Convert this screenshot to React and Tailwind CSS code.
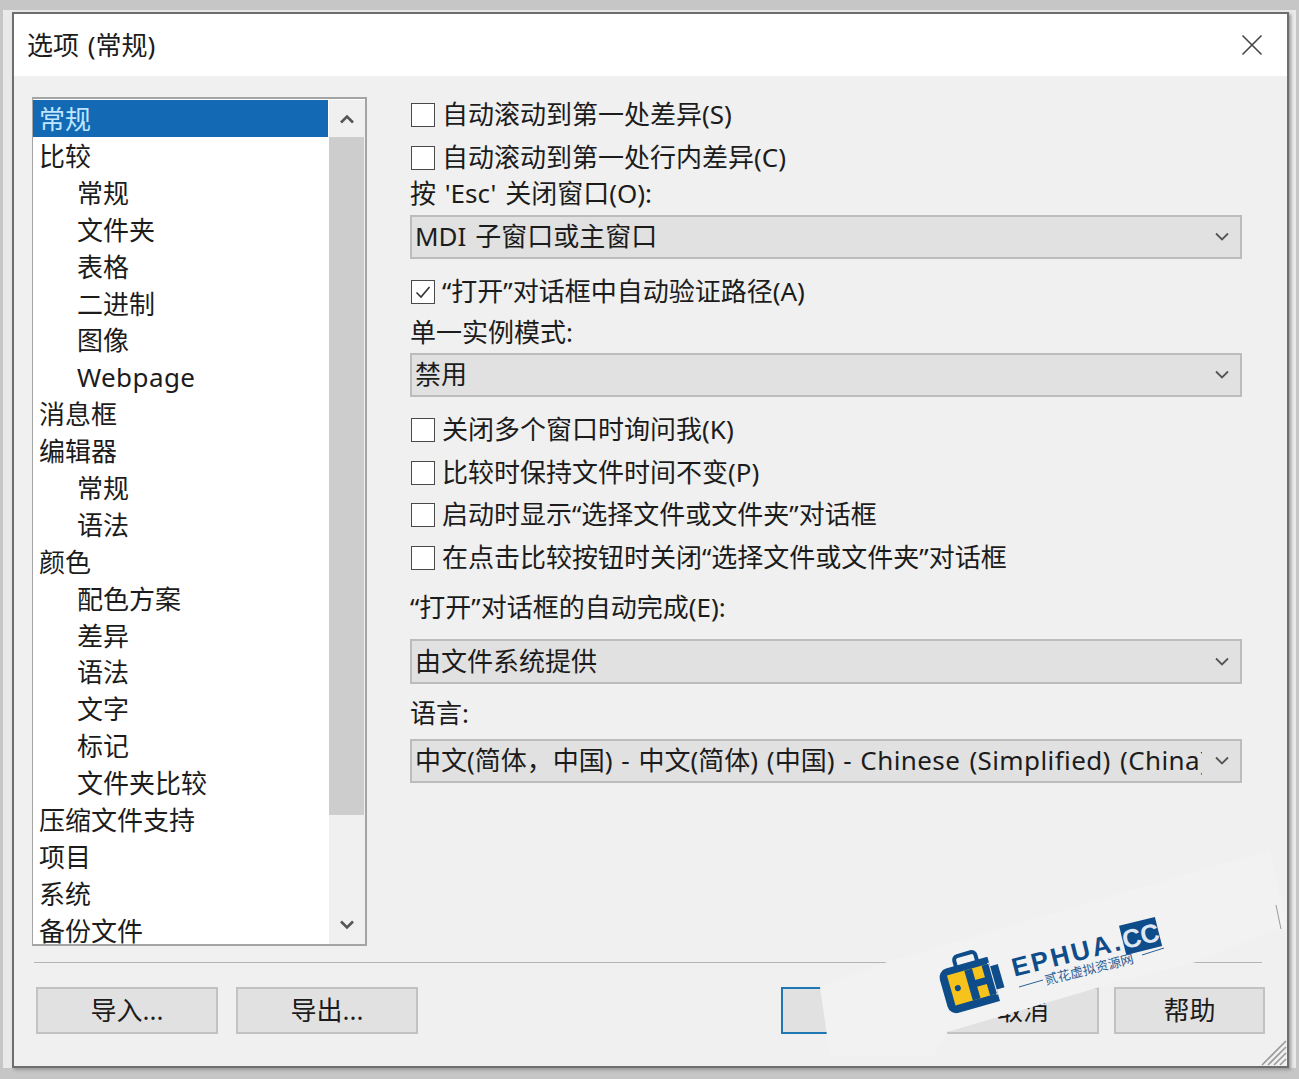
const FONT = { fontFamily: '"Noto Sans", "Noto Sans CJK SC", sans-serif' }

const NAV = [
  ['比较', 0],
  ['常规', 1],
  ['文件夹', 1],
  ['表格', 1],
  ['二进制', 1],
  ['图像', 1],
  ['Webpage', 1],
  ['消息框', 0],
  ['编辑器', 0],
  ['常规', 1],
  ['语法', 1],
  ['颜色', 0],
  ['配色方案', 1],
  ['差异', 1],
  ['语法', 1],
  ['文字', 1],
  ['标记', 1],
  ['文件夹比较', 1],
  ['压缩文件支持', 0],
  ['项目', 0],
  ['系统', 0],
  ['备份文件', 0],
]

function Chevron({ up, width = 2.6, className }) {
  return (
    <svg width="16" height="12" viewBox="0 0 16 12" className={className}>
      <path
        d={up ? 'M2 9.5 L8 3.5 L14 9.5' : 'M2 2.5 L8 8.5 L14 2.5'}
        fill="none"
        stroke="#555"
        strokeWidth={width}
      />
    </svg>
  )
}

function Check({ label, checked, className }) {
  return (
    <div className={`flex h-[36px] items-center gap-[7px] ${className}`}>
      <span className="ml-[1px] flex h-[24px] w-[24px] shrink-0 items-center justify-center border border-[#4a4a4a] bg-white">
        {checked && (
          <svg width="18" height="18" viewBox="0 0 18 18">
            <path d="M2.5 9.5 L7 14 L15.5 4" fill="none" stroke="#333" strokeWidth="1.6" />
          </svg>
        )}
      </span>
      <span className="whitespace-nowrap pb-[1px]">{label}</span>
    </div>
  )
}

function Label({ children, className }) {
  return <div className={`flex h-[36px] items-center whitespace-nowrap pb-[1px] ${className}`}>{children}</div>
}

function Select({ value, className }) {
  return (
    <div className={`flex items-center border-2 border-[#bcbcbc] bg-[#e1e1e1] pl-[3px] ${className}`}>
      <span className="w-[787px] overflow-hidden whitespace-nowrap pb-[1px]">{value}</span>
      <Chevron width={1.8} className="ml-[12px]" />
    </div>
  )
}

function Btn({ children, className }) {
  return (
    <div className={`flex h-[47px] items-center justify-center border-2 border-[#c2c2c2] bg-[#e1e1e1] ${className}`}>
      {children}
    </div>
  )
}

function Watermark() {
  return (
    <>
      <svg width="1299" height="1079" viewBox="0 0 1299 1079" className="absolute left-0 top-0">
        <polygon
          points="820,987 887,962 1270,850 1286,925 1196,962 1100,987 947,1032 934,1056 830,1056"
          fill="#f2f2f2"
        />
        <path d="M1276 905 L1281 929" stroke="#9a9a9a" strokeWidth="1" />
        <g transform="rotate(-16 972 983)">
          <rect x="961" y="953" width="22" height="14" rx="4" fill="none" stroke="#0f4c8a" strokeWidth="4" />
          <rect x="942" y="962" width="60" height="46" rx="9" fill="#0f4c8a" />
          <rect x="950" y="969" width="42" height="31" fill="#f6c31c" />
          <circle cx="957" cy="984" r="3" fill="#0f4c8a" />
          <rect x="968" y="969" width="8" height="31" fill="#0f4c8a" />
          <rect x="992" y="968" width="2" height="33" fill="#f2f2f2" />
          <rect x="986" y="969" width="7" height="31" fill="#0f4c8a" />
          <rect x="972" y="981" width="16" height="7" fill="#0f4c8a" />
          <rect x="994" y="958" width="10" height="14" fill="#f2f2f2" />
          <rect x="994" y="996" width="10" height="14" fill="#f2f2f2" />
        </g>
        <path d="M1019 987 L1043 980 M1142 955 L1164 948" stroke="#2a5f96" strokeWidth="1" />
      </svg>
      <div
        className="absolute left-[1012px] top-[955px] origin-left -rotate-[14deg] whitespace-nowrap text-[26px] font-black leading-none tracking-[2.6px] text-[#0f4c8a]"
        style={{ fontFamily: '"Liberation Sans", sans-serif' }}
      >
        EPHUA.<span className="bg-[#0f4c8a] tracking-[0px] text-[#dfe8f2]">CC</span>
      </div>
      <div className="absolute left-[1045px] top-[974px] origin-left -rotate-[14deg] whitespace-nowrap text-[13px] leading-none text-[#2a5f96]">
        贰花虚拟资源网
      </div>
    </>
  )
}

export default function App() {
  return (
    <div
      className="relative h-[1079px] w-[1299px] overflow-hidden bg-[#c6c6c6] pb-[11px] pl-[3px] pr-[3px] pt-[10px] text-[26px] text-[#1c1c1c] [word-spacing:2px]"
      style={FONT}
    >
      <div className="h-full bg-[#e9e9e9] pl-[9px] pr-[7px] pt-[2px]">
        <div className="relative flex h-[1056px] w-[1277px] flex-col border-2 border-[#6e6e6e] bg-[#f0f0f0] shadow-[2px_2px_3px_#999]">
          <div className="flex h-[62px] items-center justify-between bg-white pl-[13px] pr-[24px]">
            <span>选项 (常规)</span>
            <svg width="22" height="22" viewBox="0 0 22 22">
              <path d="M1.5 1.5 L20.5 20.5 M20.5 1.5 L1.5 20.5" stroke="#444" strokeWidth="1.6" />
            </svg>
          </div>

          <div className="flex pl-[18px] pt-[21px]">
            <div className="flex h-[849px] w-[335px] shrink-0 overflow-hidden border-y-2 border-l border-r-2 border-[#a4a4a4] bg-white pt-[1px]">
              <div className="w-[295px] shrink-0">
                <div className="flex h-[37px] items-center bg-[#1469b4] pl-[6px] pt-[1px] text-[#bfe6ff]">常规</div>
                {NAV.map(([name, level], i) => (
                  <div
                    key={i}
                    className={`flex h-[36.9px] items-center pt-[2px] ${level ? 'pl-[44px]' : 'pl-[6px]'} ${name === 'Webpage' ? 'tracking-[0.4px]' : ''}`}
                  >
                    {name}
                  </div>
                ))}
              </div>
              <div className="ml-[1px] flex flex-1 flex-col bg-[#f0f0f0]">
                <div className="flex h-[37px] items-center justify-center">
                  <Chevron up />
                </div>
                <div className="h-[678px] w-[35px] bg-[#cdcdcd]" />
                <div className="flex flex-1 items-end justify-center pb-[13px]">
                  <Chevron />
                </div>
              </div>
            </div>

            <div className="ml-[43px] flex w-[832px] flex-col">
              <Check label="自动滚动到第一处差异(S)" />
              <Check label="自动滚动到第一处行内差异(C)" className="mt-[7px]" />
              <Label>按 'Esc' 关闭窗口(O):</Label>
              <Select value="MDI 子窗口或主窗口" className="mt-[3px] h-[44px]" />
              <Check label="“打开”对话框中自动验证路径(A)" checked className="mt-[15px]" />
              <Label className="mt-[5px]">单一实例模式:</Label>
              <Select value="禁用" className="mt-[2px] h-[44px]" />
              <Check label="关闭多个窗口时询问我(K)" className="mt-[15px]" />
              <Check label="比较时保持文件时间不变(P)" className="mt-[7px]" />
              <Check label="启动时显示“选择文件或文件夹”对话框" className="mt-[6px]" />
              <Check label="在点击比较按钮时关闭“选择文件或文件夹”对话框" className="mt-[7px]" />
              <Label className="mt-[14px]">“打开”对话框的自动完成(E):</Label>
              <Select value="由文件系统提供" className="mt-[13px] h-[45px]" />
              <Label className="mt-[12px]">语言:</Label>
              <Select
                value={
                  <>
                    中文(简体，中国) - 中文(简体) (中国) - <span className="tracking-[0.4px]">Chinese (Simplified) (China)</span>
                  </>
                }
                className="mt-[7px] h-[44px]"
              />
            </div>
          </div>

          <div className="ml-[20px] mt-[16px] h-[1px] w-[1228px] bg-[#b4b4b4]" />

          <div className="ml-[22px] mt-[24px] flex">
            <Btn className="w-[182px]">导入...</Btn>
            <Btn className="ml-[18px] w-[182px]">导出...</Btn>
            <Btn className="ml-[363px] w-[152px] !border-[#1f78b4]">确定</Btn>
            <Btn className="ml-[14px] w-[152px]">取消</Btn>
            <Btn className="ml-[15px] w-[151px]">帮助</Btn>
          </div>

          <svg width="28" height="28" viewBox="0 0 28 28" className="absolute bottom-0 right-0">
            <path d="M27 3 L3 27 M27 9 L9 27 M27 15 L15 27 M27 21 L21 27" stroke="#9a9a9a" strokeWidth="1.6" />
          </svg>
        </div>
      </div>
      <Watermark />
    </div>
  )
}
